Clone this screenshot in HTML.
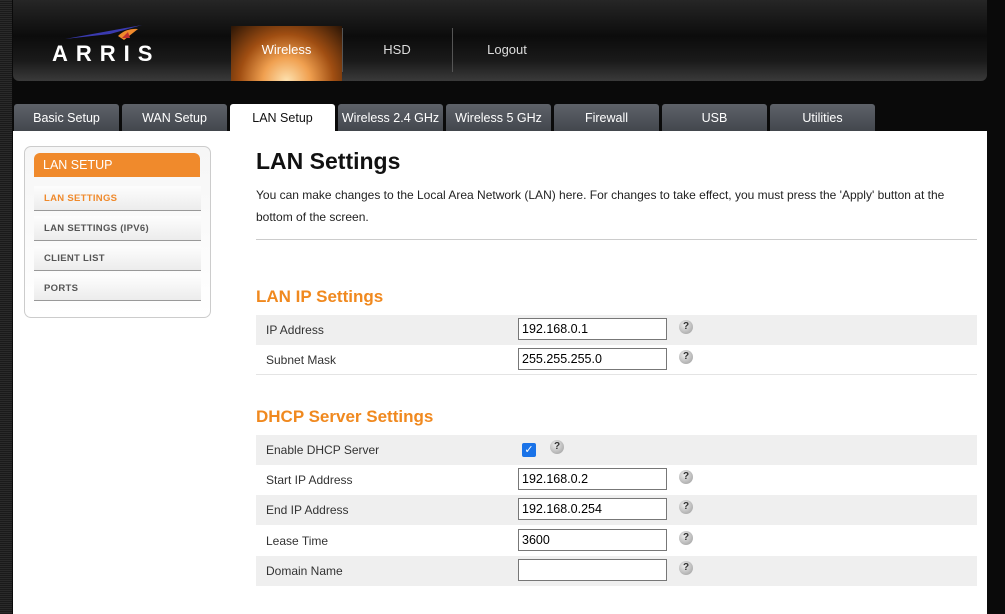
<!DOCTYPE html>
<html><head><style>
*{margin:0;padding:0;box-sizing:border-box}
body{width:1005px;height:614px;overflow:hidden;background:#0a0a0a;font-family:"Liberation Sans",Arial,sans-serif;position:relative}
.strip{position:absolute;left:0;top:0;width:12px;height:614px;background:repeating-linear-gradient(0deg,#1a1a1a 0 1px,#2a2a2a 1px 2px)}
.hdr{position:absolute;left:13px;top:0;width:974px;height:81px;border-radius:0 0 6px 6px;background:linear-gradient(#262626,#0c0c0c 45%,#1a1a1a 75%,#3a3a3a)}
.logo{position:absolute;left:52px;top:41px;color:#fff;font-size:22px;font-weight:bold;letter-spacing:8px}
.nav{position:absolute;top:0;height:81px;color:#ddd;font-size:13px;text-align:center;line-height:100px}
.wl{left:231px;width:111px;top:26px;height:55px;line-height:48px;color:#fff;background:radial-gradient(ellipse at 50% 100%,#fde2b0 0,#f0a050 30%,#a04e12 60%,#2a1506 100%)}
.sep{position:absolute;top:28px;width:1px;height:44px;background:#555}
.tab{position:absolute;top:104px;height:27px;width:105px;background:linear-gradient(#5e6269,#43474d);color:#fff;font-size:12.5px;text-align:center;line-height:28px;border-radius:3px 3px 0 0}
.tab.on{background:#fff;color:#111}
.main{position:absolute;left:13px;top:131px;width:974px;height:483px;background:#fff}
.side{position:absolute;left:24px;top:146px;width:187px;height:172px;border:1px solid #ccc;border-radius:7px;background:linear-gradient(#f6f6f6,#fff)}
.sh{position:absolute;left:34px;top:153px;width:166px;height:24px;background:#f08a2c;border-radius:6px 6px 0 0;color:#fff;font-size:12.5px;line-height:24px;padding-left:9px}
.si{position:absolute;left:34px;width:167px;height:25px;background:linear-gradient(#fdfdfd,#ececec);border-bottom:1px solid #999;color:#555;font-size:9.5px;font-weight:bold;line-height:25px;padding-left:10px;letter-spacing:.3px}
h1{position:absolute;left:256px;top:148px;font-size:23px;color:#111}
.desc{position:absolute;left:256px;top:184px;width:710px;font-size:12px;line-height:22px;color:#222}
.hr{position:absolute;left:256px;top:239px;width:721px;height:1px;background:#ccc}
h2{position:absolute;left:256px;font-size:17px;color:#f0891f}
.row{position:absolute;left:256px;width:721px;height:30px;font-size:12px;color:#333;line-height:30px;padding-left:10px}
.g{background:#efefef}
.inp{position:absolute;left:262px;top:3px;width:149px;height:22px;border:1px solid #777;background:#fff;font-size:12.5px;color:#000;line-height:20px;padding-left:3px}
.q{position:absolute;left:423px;top:5px;width:14px;height:14px;border-radius:50%;background:radial-gradient(circle at 40% 35%,#eee,#999);color:#333;font-size:10px;font-weight:bold;line-height:14px;text-align:center;padding:0}
.cb{position:absolute;left:266px;top:8px;width:14px;height:14px;background:#1a73e8;border-radius:2px;color:#fff;font-size:11px;line-height:14px;text-align:center}
</style></head><body>
<div class="strip"></div>
<div class="hdr"></div>
<svg style="position:absolute;left:60px;top:22px" width="90" height="22"><path d="M5 17 L82 3 L50 12 Z" fill="#3a3ab0"/><path d="M58 14 Q66 6 78 7 L64 18 Z" fill="#f08a2c"/><path d="M62 16 L68 10 L70 16Z" fill="#c03030"/></svg>
<div class="logo">ARRIS</div>
<div class="nav wl" style="position:absolute">Wireless</div>
<div class="sep" style="left:342px"></div>
<div class="nav" style="left:342px;width:110px">HSD</div>
<div class="sep" style="left:452px"></div>
<div class="nav" style="left:452px;width:110px">Logout</div>
<div class="tab" style="left:14px">Basic Setup</div>
<div class="tab" style="left:122px">WAN Setup</div>
<div class="tab on" style="left:230px">LAN Setup</div>
<div class="tab" style="left:338px">Wireless 2.4 GHz</div>
<div class="tab" style="left:446px">Wireless 5 GHz</div>
<div class="tab" style="left:554px">Firewall</div>
<div class="tab" style="left:662px">USB</div>
<div class="tab" style="left:770px">Utilities</div>
<div class="main"></div>
<div class="side"></div>
<div class="sh">LAN SETUP</div>
<div class="si" style="top:186px;color:#f08a2c">LAN SETTINGS</div>
<div class="si" style="top:216px">LAN SETTINGS (IPV6)</div>
<div class="si" style="top:246px">CLIENT LIST</div>
<div class="si" style="top:276px">PORTS</div>
<h1>LAN Settings</h1>
<div class="desc">You can make changes to the Local Area Network (LAN) here. For changes to take effect, you must press the 'Apply' button at the bottom of the screen.</div>
<div class="hr"></div>
<h2 style="top:287px">LAN IP Settings</h2>
<div class="row g" style="top:315px">IP Address<div class="inp">192.168.0.1</div><div class="q">?</div></div>
<div class="row" style="top:345px;border-bottom:1px solid #e4e4e4">Subnet Mask<div class="inp">255.255.255.0</div><div class="q">?</div></div>
<h2 style="top:407px">DHCP Server Settings</h2>
<div class="row g" style="top:435px">Enable DHCP Server<div class="cb" style="left:266px">✓</div><div class="q" style="left:294px">?</div></div>
<div class="row" style="top:465px">Start IP Address<div class="inp">192.168.0.2</div><div class="q">?</div></div>
<div class="row g" style="top:495px">End IP Address<div class="inp">192.168.0.254</div><div class="q">?</div></div>
<div class="row" style="top:526px">Lease Time<div class="inp">3600</div><div class="q">?</div></div>
<div class="row g" style="top:556px">Domain Name<div class="inp"></div><div class="q">?</div></div>
</body></html>
